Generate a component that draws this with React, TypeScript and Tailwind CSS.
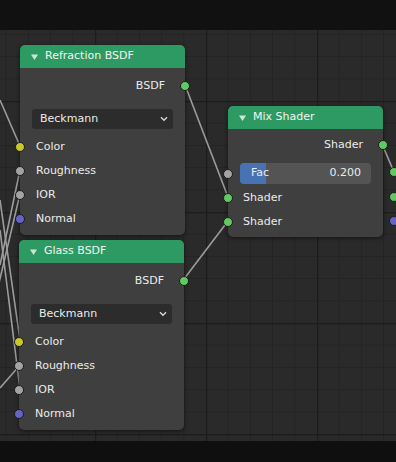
import React from 'react';

type Sock = 'yellow' | 'gray' | 'purple' | 'green';

const sockColor: Record<Sock, string> = {
  yellow: 'bg-[#c8c82a]',
  gray: 'bg-[#a3a3a3]',
  purple: 'bg-[#6464c8]',
  green: 'bg-[#62c862]',
};

function Socket({ color, side }: { color: Sock; side: 'left' | 'right' }) {
  return (
    <span
      className={`absolute top-1/2 h-[10px] w-[10px] -translate-y-1/2 rounded-full border border-[#1b1b1b] ${sockColor[color]} ${
        side === 'left' ? 'left-[-5px]' : 'right-[-5px]'
      }`}
    />
  );
}

function Header({ title }: { title: string }) {
  return (
    <div className="flex h-[23px] items-center rounded-t-[5px] bg-[#2e9a63] pl-[11px] text-[11px] text-[#f0f4f1]">
      <svg width="7" height="6" viewBox="0 0 7 6" className="mr-[7px]">
        <path d="M0 0.5h7L3.5 6z" fill="#cbe6d5" />
      </svg>
      {title}
    </div>
  );
}

function OutRow({ label }: { label: string }) {
  return (
    <div className="relative flex h-6 items-center justify-end pr-5">
      {label}
      <Socket color="green" side="right" />
    </div>
  );
}

function InRow({ label, color }: { label: string; color: Sock }) {
  return (
    <div className="relative flex h-6 items-center pl-4">
      {label}
      <Socket color={color} side="left" />
    </div>
  );
}

function Dropdown({ value }: { value: string }) {
  return (
    <div className="mx-3 flex h-5 items-center justify-between rounded-[3px] bg-[#2c2c2c] pl-2 pr-[5px]">
      <span>{value}</span>
      <svg width="8" height="6" viewBox="0 0 8 6">
        <path d="M1 1.2l3 3 3-3" stroke="#d8d8d8" strokeWidth="1.4" fill="none" />
      </svg>
    </div>
  );
}

function BsdfNode({ title, className }: { title: string; className: string }) {
  return (
    <div className={`absolute w-[165px] rounded-[5px] bg-[#3f3f3f] shadow-[0_1px_4px_rgba(0,0,0,0.55)] ${className}`}>
      <Header title={title} />
      <div className="pb-[4px] pt-[6px]">
        <OutRow label="BSDF" />
        <div className="mt-[11px]">
          <Dropdown value="Beckmann" />
        </div>
        <div className="mt-[6px]">
          <InRow label="Color" color="yellow" />
          <InRow label="Roughness" color="gray" />
          <InRow label="IOR" color="gray" />
          <InRow label="Normal" color="purple" />
        </div>
      </div>
    </div>
  );
}

function MixNode() {
  return (
    <div className="absolute left-[228px] top-[76px] w-[155px] rounded-[5px] bg-[#3f3f3f] shadow-[0_1px_4px_rgba(0,0,0,0.55)]">
      <Header title="Mix Shader" />
      <div className="pb-[3px] pt-[4px]">
        <OutRow label="Shader" />
        <div className="relative mt-[6px] flex h-[21px] items-center">
          <div className="relative mx-3 flex h-[21px] flex-1 items-center justify-between overflow-hidden rounded-[4px] bg-[#545454] pl-[11px] pr-[10px]">
            <span className="absolute inset-y-0 left-0 w-[20%] bg-[#4772b3]" />
            <span className="relative">Fac</span>
            <span className="relative">0.200</span>
          </div>
          <Socket color="gray" side="left" />
        </div>
        <div className="mt-[2px]">
          <div className="relative flex h-6 items-center pl-[15px]">
            Shader
            <Socket color="green" side="left" />
          </div>
          <div className="relative flex h-6 items-center pl-[15px]">
            Shader
            <Socket color="green" side="left" />
          </div>
        </div>
      </div>
    </div>
  );
}

const minor = [22.2, 44.4, 66.6, 88.8];

const wires: [number, number, number, number][] = [
  [0, 70, 20, 116],
  [0, 235, 20, 140],
  [-5, 270, 20, 164],
  [0, 170, 20, 310],
  [0, 200, 20, 359],
  [0, 358, 20, 335],
  [185, 55, 228, 167],
  [184, 249, 228, 191],
  [382, 114, 394, 142],
];

export default function App() {
  return (
    <div className="h-[462px] w-[396px] overflow-hidden bg-[#0f0f0f] font-['DejaVu_Sans',sans-serif] text-[11px] text-[#ebebeb]">
      <div className="h-[30px] bg-[#111111]" />
      <div className="relative h-[411px] overflow-hidden bg-[#2a2a2a]">
        <svg className="absolute inset-0" width="396" height="411">
          <defs>
            <pattern id="grid" x="95" y="71" width="111" height="111" patternUnits="userSpaceOnUse">
              {minor.map((m) => (
                <g key={m}>
                  <line x1={m} y1="0" x2={m} y2="111" stroke="#232323" strokeWidth="1" />
                  <line x1="0" y1={m} x2="111" y2={m} stroke="#232323" strokeWidth="1" />
                </g>
              ))}
              <line x1="0.5" y1="0" x2="0.5" y2="111" stroke="#1c1c1c" strokeWidth="1.5" />
              <line x1="0" y1="0.5" x2="111" y2="0.5" stroke="#1c1c1c" strokeWidth="1.5" />
            </pattern>
          </defs>
          <rect width="396" height="411" fill="url(#grid)" />
          {wires.map(([x1, y1, x2, y2], i) => (
            <line key={i} x1={x1} y1={y1} x2={x2} y2={y2} stroke="#9c9c9c" strokeWidth="1.6" />
          ))}
        </svg>

        <BsdfNode title="Refraction BSDF" className="left-[20px] top-[15px]" />
        <BsdfNode title="Glass BSDF" className="left-[19px] top-[210px]" />
        <MixNode />

        {/* node hanging off the right edge */}
        <span className="absolute left-[389px] top-[137px] h-[10px] w-[10px] rounded-full border border-[#1b1b1b] bg-[#62c862]" />
        <span className="absolute left-[389px] top-[162px] h-[10px] w-[10px] rounded-full border border-[#1b1b1b] bg-[#62c862]" />
        <span className="absolute left-[389px] top-[186px] h-[10px] w-[10px] rounded-full border border-[#1b1b1b] bg-[#6464c8]" />
      </div>
    </div>
  );
}
